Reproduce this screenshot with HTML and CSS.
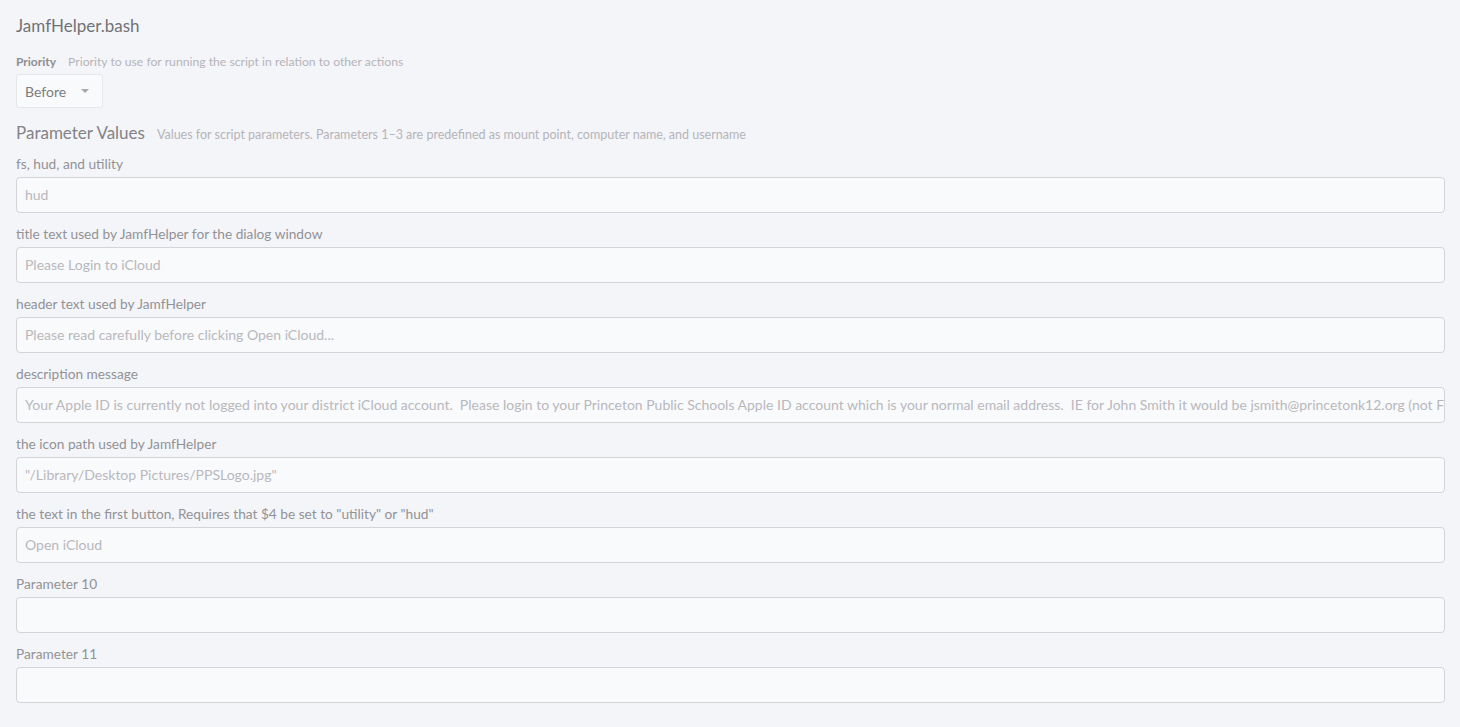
FILE: index.html
```
<!DOCTYPE html>
<html lang="en">
<head>
  <meta charset="UTF-8">
  <title>JamfHelper.bash</title>
  <link rel="stylesheet" href="styles.css">
</head>
<body>
  <div class="script-panel">
    <h1 class="script-title">JamfHelper.bash</h1>

    <div class="priority">
      <div class="field-head">
        <span class="field-name">Priority</span>
        <span class="field-hint">Priority to use for running the script in relation to other actions</span>
      </div>
      <div class="select-box">
        <span>Before</span>
        <span class="caret"></span>
      </div>
    </div>

    <div class="section-head">
      <h2>Parameter Values</h2>
      <span class="section-hint">Values for script parameters. Parameters 1–3 are predefined as mount point, computer name, and username</span>
    </div>

    <div class="param">
      <label>fs, hud, and utility</label>
      <div class="text-input">hud</div>
    </div>
    <div class="param">
      <label>title text used by JamfHelper for the dialog window</label>
      <div class="text-input">Please Login to iCloud</div>
    </div>
    <div class="param">
      <label>header text used by JamfHelper</label>
      <div class="text-input">Please read carefully before clicking Open iCloud...</div>
    </div>
    <div class="param">
      <label>description message</label>
      <div class="text-input">Your Apple ID is currently not logged into your district iCloud account.&nbsp; Please login to your Princeton Public Schools Apple ID account which is your normal email address.&nbsp; IE for John Smith it would be jsmith@princetonk12.org (not F</div>
    </div>
    <div class="param">
      <label>the icon path used by JamfHelper</label>
      <div class="text-input">"/Library/Desktop Pictures/PPSLogo.jpg"</div>
    </div>
    <div class="param">
      <label>the text in the first button, Requires that $4 be set to "utility" or "hud"</label>
      <div class="text-input">Open iCloud</div>
    </div>
    <div class="param">
      <label>Parameter 10</label>
      <div class="text-input"></div>
    </div>
    <div class="param">
      <label>Parameter 11</label>
      <div class="text-input"></div>
    </div>
  </div>
</body>
</html>
```

FILE: styles.css
```
body {
  margin: 0;
  background-color: #f4f5f9;
  font-family: "Lato", "Open Sans", Arial, sans-serif;
  color: #8c8c90;
}

.script-panel {
  padding: 15px 15px 24px 16px;
}

.script-title {
  margin: 0;
  font-size: 17px;
  font-weight: 400;
  color: #727276;
  line-height: 22px;
}

.priority {
  margin-top: 17px;
}

.field-head {
  display: flex;
  align-items: baseline;
  gap: 12px;
  line-height: 16px;
}

.field-name {
  font-size: 12px;
  font-weight: 700;
  color: #8e8e92;
}

.field-hint {
  font-size: 12.2px;
  color: #b4b4b8;
}

.select-box {
  display: inline-flex;
  align-items: center;
  gap: 15px;
  margin-top: 4px;
  height: 34px;
  padding: 0 13px 0 8px;
  box-sizing: border-box;
  background-color: #f9fafb;
  border: 1px solid #e6e7eb;
  border-radius: 3px;
  font-size: 14px;
  color: #7c7c80;
}

.caret {
  width: 0;
  height: 0;
  border-left: 4px solid transparent;
  border-right: 4px solid transparent;
  border-top: 4px solid #a8a8ac;
}

.section-head {
  display: flex;
  align-items: baseline;
  gap: 12px;
  margin-top: 15px;
}

.section-head h2 {
  margin: 0;
  font-size: 17px;
  font-weight: 400;
  color: #838387;
  line-height: 20px;
}

.section-hint {
  font-size: 12.5px;
  color: #b4b4b8;
}

.param {
  margin-top: 13px;
}

.param + .param {
  margin-top: 13px;
}

.param label {
  display: block;
  font-size: 13.7px;
  line-height: 16px;
  color: #929296;
}

.text-input {
  margin-top: 5px;
  height: 36px;
  box-sizing: border-box;
  padding: 0 8px;
  line-height: 34px;
  background-color: #f9fafc;
  border: 1px solid #d3d3d8;
  border-radius: 4px;
  font-size: 14px;
  color: #b8b8bc;
  white-space: nowrap;
  overflow: hidden;
}
```
